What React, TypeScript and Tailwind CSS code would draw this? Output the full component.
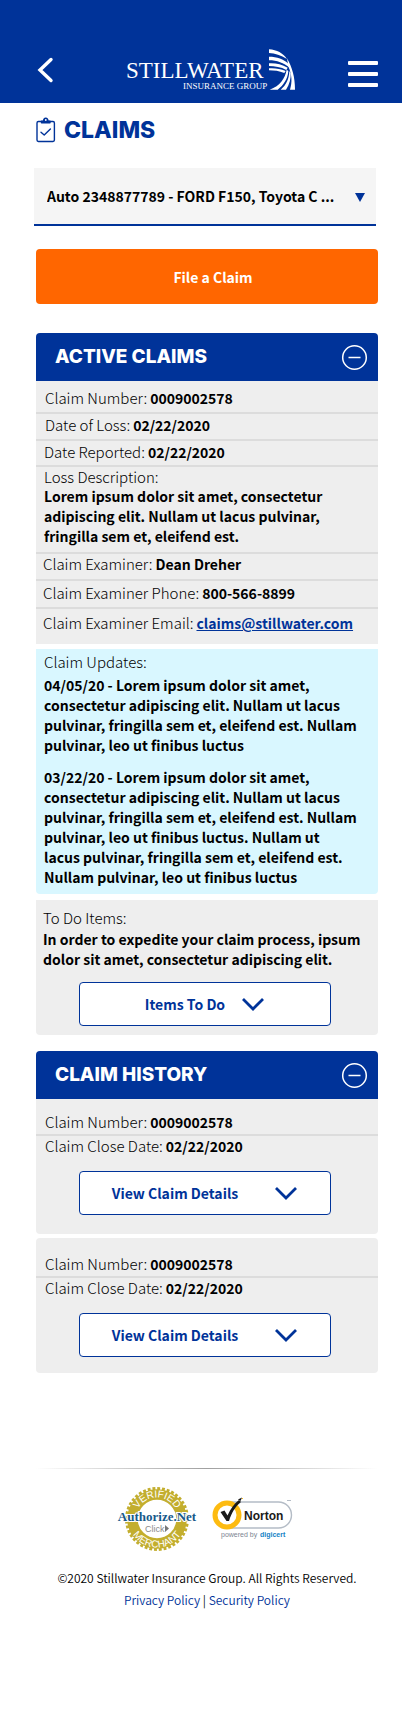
import React, { useState } from "react";

const font = "font-['Noto_Sans_CJK_SC',sans-serif]";

const Logo: React.FC = () => (
  <svg width="170" height="44" viewBox="0 0 170 44" fill="#fff" role="img" aria-label="Stillwater Insurance Group">
    <text x="0" y="31" fontSize="23" fontFamily="Liberation Serif, serif">
      STILLWATER
    </text>
    <text x="57" y="42" fontSize="9" fontFamily="Liberation Serif, serif">
      INSURANCE GROUP
    </text>
    <g transform="translate(143 2) scale(.3333)">
      <path d="M0 1C24 3 42 12 54 30C36 18 18 13 0 12Z" />
      <path d="M0 23C24 23 44 30 58 44L62 56C44 42 24 34 0 34Z" />
      <path d="M0 43C20 42 38 46 56 56L52 63C36 54 18 51 0 51Z" />
      <path d="M0 58C18 57 34 59 50 66L46 72C30 66 16 64 0 64Z" />
      <path d="M53 62C48 88 34 110 2 122H26C44 108 56 90 58 66Z" />
      <path d="M61 66C60 90 52 108 35 122H51C62 106 66 88 65 72Z" />
      <path d="M54 28C70 56 78 84 78 122H63C70 100 69 78 58 52Z" />
    </g>
  </svg>
);

const ClipboardIcon: React.FC = () => (
  <svg width="20" height="26" viewBox="0 0 20 26" fill="none" stroke="#003399" strokeWidth="1.4" strokeLinejoin="round">
    <rect x="1" y="4.5" width="17.4" height="20" rx="1.4" />
    <path d="M5.5 5.8V4.2H7.6C7.6 0.3 12 0.3 12 4.2H14V5.8Z" fill="#003399" />
    <circle cx="9.8" cy="3" r="0.9" fill="#fff" stroke="none" />
    <path d="M5 15.2L8.2 18L14.4 12" strokeLinecap="round" />
  </svg>
);

const ChevronDown: React.FC = () => (
  <svg width="24" height="15" viewBox="0 0 24 15" fill="none" stroke="#003399" strokeWidth="2.8">
    <path d="M2 2L12 12L22 2" />
  </svg>
);

const AuthorizeSeal: React.FC = () => (
  <svg width="82" height="66" viewBox="0 0 82 66" role="img" aria-label="Authorize.Net Verified Merchant">
    <defs>
      <path id="sealTop" d="M19.500 33A21.500 21.500 0 0 1 62.500 33" />
      <path id="sealBottom" d="M12.500 33A28.500 28.500 0 0 0 69.500 33" />
    </defs>
    <circle cx="41" cy="33" r="30.500" fill="none" stroke="#c3ae2e" strokeWidth="3" strokeDasharray="2.9 1.891" />
    <circle cx="41" cy="33" r="24.500" fill="none" stroke="#c3ae2e" strokeWidth="10.500" />
    <text fontSize="10" fill="#fff" fontFamily="Liberation Sans, sans-serif" textAnchor="middle">
      <textPath href="#sealTop" startOffset="50%">VERIFIED</textPath>
    </text>
    <text fontSize="10" fill="#fff" fontFamily="Liberation Sans, sans-serif" textAnchor="middle">
      <textPath href="#sealBottom" startOffset="50%">MERCHANT</textPath>
    </text>
    <text x="41" y="35" fontSize="13" fontWeight="700" fill="#17598a" stroke="#fff" strokeWidth="2" paintOrder="stroke" fontFamily="Liberation Serif, serif" textAnchor="middle">
      Authorize.Net
    </text>
    <text x="29" y="46" fontSize="9" fill="#8a8a8a" fontFamily="Liberation Sans, sans-serif">
      Click
    </text>
    <path d="M49 39L53 42.500L49 46Z" fill="#777" />
  </svg>
);

const NortonSeal: React.FC = () => (
  <svg width="82" height="46" viewBox="0 0 82 46" role="img" aria-label="Norton powered by digicert">
    <rect x="8" y="6" width="71.500" height="26" rx="13" fill="#fff" stroke="#b4bcc6" strokeWidth="1.400" />
    <circle cx="15" cy="19" r="12" fill="#fff" stroke="#fdbb11" strokeWidth="5" />
    <path d="M8.500 16L12.500 14.500L15.500 19.500C18.500 13 22 7.500 27 4L29 6C23.500 10 19.500 17 17 25H14.500Z" fill="#1a1a1a" />
    <path d="M26 3.500L30 1.500L28.500 5Z" fill="#1a1a1a" />
    <rect x="30" y="2" width="1" height="1" fill="#fdbb11" />
    <text x="32" y="23.500" fontSize="12" fontWeight="700" fill="#1a1a1a" fontFamily="Liberation Sans, sans-serif">
      Norton
    </text>
    <text x="9" y="41" fontSize="7" fill="#7c8591" fontFamily="Liberation Sans, sans-serif">
      powered by
    </text>
    <text x="48" y="41" fontSize="7" fontWeight="700" fill="#1583c6" fontFamily="Liberation Sans, sans-serif">
      digicert
    </text>
    <rect x="75" y="4" width="4" height="1" fill="#b4bcc6" />
  </svg>
);

interface SectionProps {
  title: string;
  children: React.ReactNode;
}

const Section: React.FC<SectionProps> = ({ title, children }) => {
  const [open, setOpen] = useState<boolean>(true);

  return (
    <section>
      <div className="flex h-12 items-center justify-between rounded-t bg-[#003399] pr-[10px] pl-[19px]">
        <h2 className="font-['Inter',sans-serif] text-[19px] font-extrabold text-white">
          {title}
        </h2>
        <button
          type="button"
          onClick={() => setOpen(!open)}
          aria-expanded={open}
          aria-label={`Toggle ${title}`}
          className="cursor-pointer"
        >
          <svg width="27" height="27" viewBox="0 0 27 27" fill="none" stroke="#fff" strokeWidth="1.500">
            <circle cx="13.500" cy="13.500" r="11.800" />
            <path d="M7.500 13.500H19.500" />
            {!open && <path d="M13.500 7.500V19.500" />}
          </svg>
        </button>
      </div>
      {open && children}
    </section>
  );
};

interface RowProps {
  label: string;
  className: string;
  children: React.ReactNode;
}

const Row: React.FC<RowProps> = ({ label, className, children }) => (
  <div className={`flex gap-[3px] border-[#dcdcdc] ${className}`}>
    <dt className="text-[15px] leading-5 font-light">{label}</dt>
    <dd className="font-bold">{children}</dd>
  </div>
);

interface ActionButtonProps {
  className: string;
  children: React.ReactNode;
}

const ActionButton: React.FC<ActionButtonProps> = ({ className, children }) => (
  <button
    type="button"
    className={`mr-[47px] ml-[43px] flex h-11 cursor-pointer items-center justify-center rounded border border-[#003399] bg-white font-bold text-[#003399] ${className}`}
  >
    {children}
    <ChevronDown />
  </button>
);

const ClaimHistoryCard: React.FC<{ className: string }> = ({ className }) => (
  <div className={`flex flex-col bg-[#eeeeee] ${className}`}>
    <dl>
      <Row label="Claim Number:" className="border-b-2 pb-[2px] pl-[9px]">
        0009002578
      </Row>
      <Row label="Claim Close Date:" className="pl-[9px]">
        02/22/2020
      </Row>
    </dl>
    <ActionButton className="mt-[15px] gap-9">View Claim Details</ActionButton>
  </div>
);

const App: React.FC = () => {
  return (
    <div className={`bg-white text-[14px] leading-5 text-black ${font}`}>
      <header className="flex h-[103px] items-end justify-between bg-[#003399] pr-6 pb-3 pl-9">
        <button type="button" aria-label="Back" className="mb-2 cursor-pointer">
          <svg width="18" height="26" viewBox="0 0 18 26" fill="none" stroke="#fff" strokeWidth="3.400" strokeLinecap="round">
            <path d="M15 2.500L4 13L15 23.500" />
          </svg>
        </button>
        <a href="#home" className="ml-5">
          <Logo />
        </a>
        <button type="button" aria-label="Menu" className="mb-1 cursor-pointer">
          <svg width="30" height="26" viewBox="0 0 30 26" fill="#fff">
            <rect width="30" height="4" rx="1" />
            <rect y="11" width="30" height="4" rx="1" />
            <rect y="22" width="30" height="4" rx="1" />
          </svg>
        </button>
      </header>

      <main className="pr-6 pl-9">
        <div className="flex items-center gap-2 pt-[13px]">
          <ClipboardIcon />
          <h1 className="font-['Inter',sans-serif] text-[23px] leading-7 font-extrabold text-[#003399]">
            CLAIMS
          </h1>
        </div>

        <div className="relative -ml-[2px] mr-[2px] mt-6">
          <select
            aria-label="Policy"
            className="h-[58px] w-full cursor-pointer appearance-none border-b-2 border-[#003399] bg-[#f5f5f5] pr-8 pl-[13px] font-bold"
          >
            <option>Auto 2348877789 - FORD F150, Toyota C ...</option>
          </select>
          <svg width="10" height="9" viewBox="0 0 10 9" className="pointer-events-none absolute top-[25px] right-[11px]">
            <path d="M0 0H10L5 9Z" fill="#003399" />
          </svg>
        </div>

        <button
          type="button"
          className="mt-[23px] mb-[29px] h-[55px] w-full cursor-pointer rounded bg-[#ff6600] pl-3 font-bold text-white"
        >
          File a Claim
        </button>

        <Section title="ACTIVE CLAIMS">
          <dl className="bg-[#eeeeee]">
            <Row label="Claim Number:" className="border-b-2 pt-[7px] pb-1 pl-[9px]">
              0009002578
            </Row>
            <Row label="Date of Loss:" className="border-b-2 pt-[1px] pb-1 pl-[9px]">
              02/22/2020
            </Row>
            <Row label="Date Reported:" className="border-b-2 pt-[1px] pb-[3px] pl-2">
              02/22/2020
            </Row>
            <div className="border-b-2 border-[#dcdcdc] pr-8 pb-[6px] pl-2">
              <dt className="text-[15px] leading-[19px] font-light">Loss Description:</dt>
              <dd className="font-bold">
                Lorem ipsum dolor sit amet, consectetur adipiscing elit. Nullam
                ut lacus pulvinar, fringilla sem et, eleifend est.
              </dd>
            </div>
            <Row label="Claim Examiner:" className="border-b-2 pb-[5px] pl-[7px]">
              Dean Dreher
            </Row>
            <Row label="Claim Examiner Phone:" className="border-b-2 pt-[2px] pb-1 pl-[7px]">
              800-566-8899
            </Row>
            <Row label="Claim Examiner Email:" className="pt-1 pb-[11px] pl-[7px]">
              <a href="mailto:claims@stillwater.com" className="text-[#003399] underline">
                claims@stillwater.com
              </a>
            </Row>
          </dl>

          <div className="mt-[5px] rounded-b bg-[#d9f7ff] pt-[3px] pr-2 pb-[7px] pl-2">
            <h3 className="text-[15px] leading-5 font-light">Claim Updates:</h3>
            <p className="mt-[3px] font-bold">
              04/05/20 - Lorem ipsum dolor sit amet, consectetur adipiscing
              elit. Nullam ut lacus pulvinar, fringilla sem et, eleifend est.
              Nullam pulvinar, leo ut finibus luctus
            </p>
            <p className="mt-3 font-bold">
              03/22/20 - Lorem ipsum dolor sit amet, consectetur adipiscing
              elit. Nullam ut lacus pulvinar, fringilla sem et, eleifend est.
              Nullam pulvinar, leo ut finibus luctus. Nullam ut
              <br />
              lacus pulvinar, fringilla sem et, eleifend est. Nullam pulvinar,
              leo ut finibus luctus
            </p>
          </div>

          <div className="mt-[6px] flex flex-col rounded-b bg-[#eeeeee] pt-2 pb-[9px]">
            <h3 className="pl-[7px] text-[15px] leading-5 font-light">To Do Items:</h3>
            <p className="mt-[1px] pl-[7px] font-bold">
              In order to expedite your claim process, ipsum dolor sit amet,
              consectetur adipiscing elit.
            </p>
            <ActionButton className="mt-[13px] gap-4">Items To Do</ActionButton>
          </div>
        </Section>

        <div className="mt-4">
          <Section title="CLAIM HISTORY">
            <ClaimHistoryCard className="rounded-b pt-[13px] pb-[19px]" />
            <ClaimHistoryCard className="mt-1 rounded pt-4 pb-4" />
          </Section>
        </div>
      </main>

      <footer className="pr-6 pl-9">
        <div className="mt-[95px] h-px bg-linear-to-r from-transparent via-[#a0a0a0] to-transparent" />
        <div className="mt-[17px] flex items-center justify-center gap-[14px] pr-1">
          <a href="#authorize">
            <AuthorizeSeal />
          </a>
          <a href="#norton">
            <NortonSeal />
          </a>
        </div>
        <div className="mt-[15px] pb-[109px] text-center text-[12px] leading-[22px] font-[350]">
          <p>©2020 Stillwater Insurance Group. All Rights Reserved.</p>
          <p>
            <a href="#privacy" className="text-[#003399]">Privacy Policy</a>
            {" | "}
            <a href="#security" className="text-[#003399]">Security Policy</a>
          </p>
        </div>
      </footer>
    </div>
  );
};

export default App;
